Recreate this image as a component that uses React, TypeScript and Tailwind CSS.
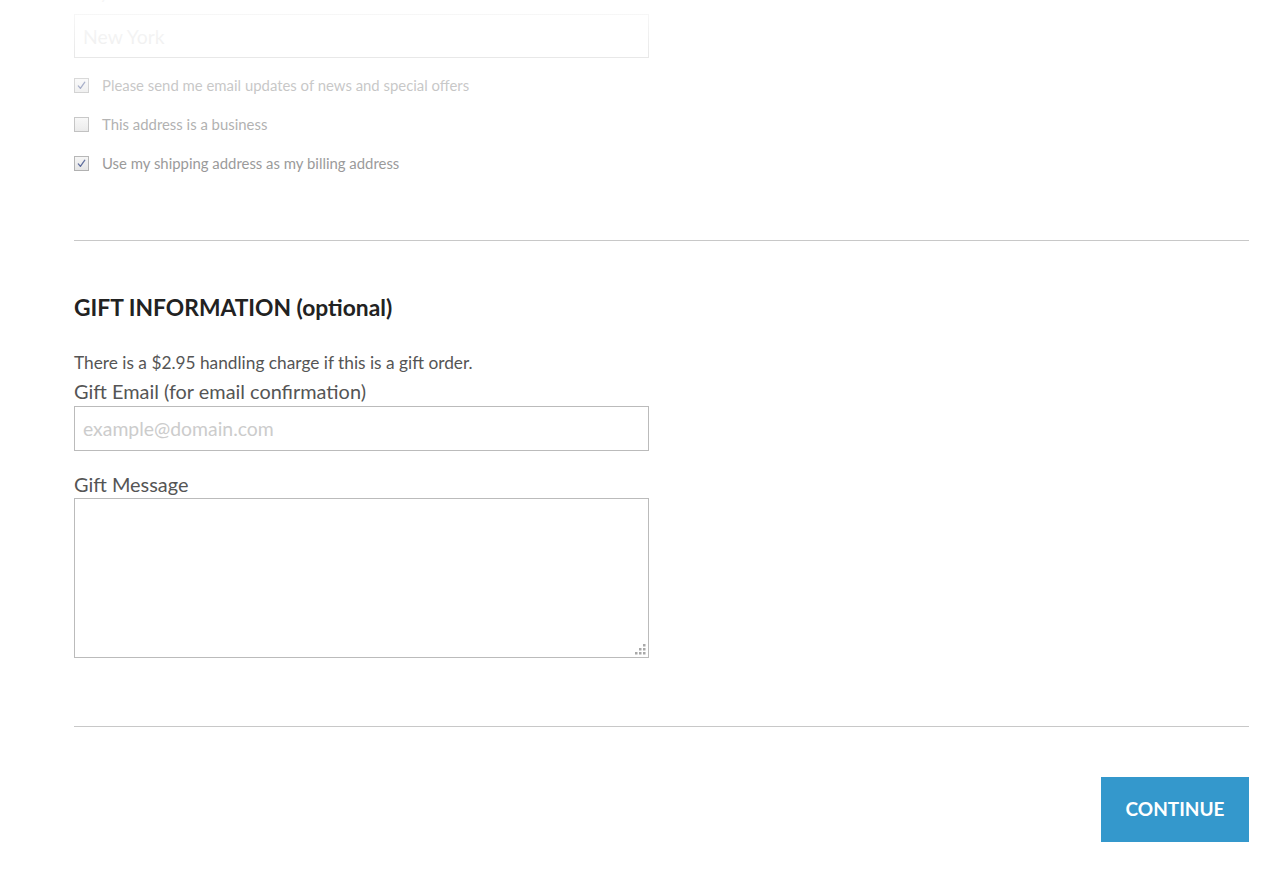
import { useState } from "react";

function CheckIcon() {
  return (
    <svg viewBox="0 0 12 12" className="w-[11px] h-[11px]">
      <path
        d="M2.5 6.5 L4.8 9.2 L9.6 2.4"
        fill="none"
        stroke="#4a5a90"
        strokeWidth="1.4"
        strokeLinecap="round"
        strokeLinejoin="round"
      />
    </svg>
  );
}

// small dotted grip in the textarea corner
function ResizeGrip() {
  const dots = [
    [8, 0],
    [4, 4],
    [8, 4],
    [0, 8],
    [4, 8],
    [8, 8],
  ];
  return (
    <svg viewBox="0 0 11 11" className="w-[11px] h-[11px]">
      {dots.map(([x, y], i) => (
        <rect key={i} x={x} y={y} width="2.5" height="2.5" fill="#a8a8a8" />
      ))}
    </svg>
  );
}

function Checkbox({
  label,
  checked,
  onToggle,
}: {
  label: string;
  checked: boolean;
  onToggle: () => void;
}) {
  return (
    <label className="flex items-center h-[16px] cursor-pointer" onClick={onToggle}>
      <span className="w-[15px] h-[15px] border border-[#a9a9a9] bg-linear-to-b from-[#f4f4f4] to-[#e2e2e2] flex items-center justify-center">
        {checked && <CheckIcon />}
      </span>
      <span className="ml-[13px] text-[14.9px] text-[#8c8c8c]">{label}</span>
    </label>
  );
}

export default function App() {
  const [options, setOptions] = useState({
    newsletter: true,
    business: false,
    sameBilling: true,
  });
  const [giftEmail, setGiftEmail] = useState("");
  const [giftMessage, setGiftMessage] = useState("");

  const toggle = (key: keyof typeof options) =>
    setOptions({ ...options, [key]: !options[key] });

  return (
    <div
      className="relative bg-white min-h-[887px] overflow-hidden"
      style={{ fontFamily: "Lato, 'Open Sans', sans-serif" }}
    >
      <div className="pl-[74px] pr-[36px] mt-[-22px]">
        {/* shipping address (tail end) */}
        <div className="w-[575px]">
          <div className="text-[20px] leading-[26px] text-[#555]">City</div>
          <input
            type="text"
            placeholder="New York"
            className="mt-[10px] w-full h-[44px] border border-[#bbb] px-[8px] text-[19.4px] placeholder:text-[#ccc] outline-none"
          />
        </div>
        <div className="mt-[19px] flex flex-col gap-[23px]">
          <Checkbox
            label="Please send me email updates of news and special offers"
            checked={options.newsletter}
            onToggle={() => toggle("newsletter")}
          />
          <Checkbox
            label="This address is a business"
            checked={options.business}
            onToggle={() => toggle("business")}
          />
          <Checkbox
            label="Use my shipping address as my billing address"
            checked={options.sameBilling}
            onToggle={() => toggle("sameBilling")}
          />
        </div>

        <hr className="mt-[69px] border-t border-[#c8c8c8]" />

        {/* gift information */}
        <h2 className="mt-[52px] text-[22.8px] leading-[28px] font-bold text-[#222]">
          GIFT INFORMATION (optional)
        </h2>
        <p className="mt-[30px] text-[17.3px] leading-[24px] text-[#555]">
          There is a $2.95 handling charge if this is a gift order.
        </p>
        <div className="w-[575px]">
          <label className="block text-[19.9px] leading-[26px] text-[#555] mt-[3px]">
            Gift Email (for email confirmation)
          </label>
          <input
            type="email"
            value={giftEmail}
            onChange={(e) => setGiftEmail(e.target.value)}
            placeholder="example@domain.com"
            className="mt-[2px] w-full h-[45px] border border-[#bbb] px-[8px] text-[19.4px] text-[#555] placeholder:text-[#ccc] outline-none"
          />
          <label className="block mt-[20px] text-[19.9px] leading-[26px] text-[#555]">
            Gift Message
          </label>
          <div className="relative mt-[1px]">
            <textarea
              value={giftMessage}
              onChange={(e) => setGiftMessage(e.target.value)}
              className="block w-full h-[160px] border border-[#bbb] p-[8px] text-[17px] text-[#555] outline-none resize-none"
            />
            <span className="pointer-events-none absolute right-[3px] bottom-[3px] flex">
              <ResizeGrip />
            </span>
          </div>
        </div>

        <hr className="mt-[68px] border-t border-[#c8c8c8]" />

        <div className="mt-[50px] flex justify-end">
          <button className="w-[148px] h-[65px] bg-[#3498cc] text-white text-[19px] font-bold">
            CONTINUE
          </button>
        </div>
      </div>

      {/* fade over the top of the page */}
      <div className="pointer-events-none absolute inset-x-0 top-0 h-[190px] bg-linear-to-b from-white/95 to-white/0" />
    </div>
  );
}
